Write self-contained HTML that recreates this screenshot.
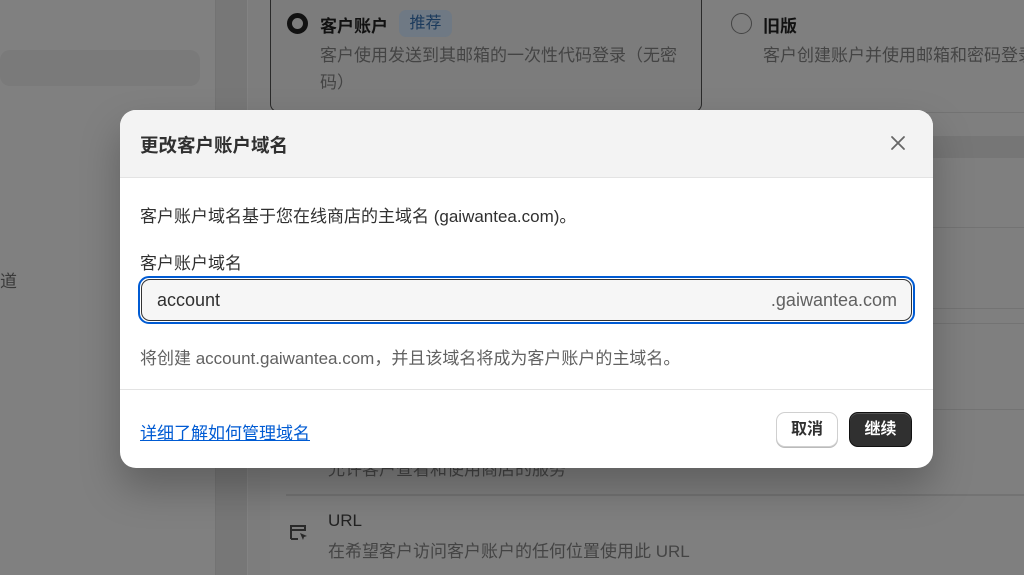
<!DOCTYPE html>
<html><head><meta charset="utf-8"><style>
*{box-sizing:border-box;margin:0;padding:0}
body{width:1024px;height:575px;overflow:hidden;background:#7f7f7f;position:relative;font-family:"Liberation Sans","Noto Sans CJK SC",sans-serif;color:#303030}
.a{position:absolute}
.bgtxt{color:#3a3a3a}
.sub{color:#444;font-size:17px}
</style></head><body>
<div class="a" style="left:0;top:0;width:215px;height:575px;background:#808080"></div>
<div class="a" style="left:0;top:50px;width:200px;height:36px;background:#7a7a7a;border-radius:10px"></div>
<div class="a bgtxt" style="left:0;top:267px;font-size:17px">道</div>
<div class="a" style="left:215px;top:0;width:33px;height:575px;background:#777;border-left:1px solid #737373;border-right:1px solid #838383"></div>
<div class="a" style="left:248px;top:0;width:22px;height:575px;background:#7d7d7d"></div>
<div class="a" style="left:270px;top:0;width:432px;height:112px;border:1px solid #2a2a2a;border-top:none;border-radius:0 0 8px 8px;background:#7c7c7c"></div>
<div class="a" style="left:287px;top:13px;width:21px;height:21px;border:5px solid #111;border-radius:50%"></div>
<div class="a" style="left:320px;top:12px;font-size:17px;font-weight:bold;color:#111">客户账户</div>
<div class="a" style="left:399px;top:10px;width:53px;height:27px;background:#6f7984;border-radius:7px;color:#1b3a5c;font-size:16px;text-align:center;line-height:27px">推荐</div>
<div class="a sub" style="left:320px;top:42px;width:372px;line-height:27px">客户使用发送到其邮箱的一次性代码登录（无密码）</div>
<div class="a" style="left:731px;top:13px;width:21px;height:21px;border:1px solid #444;border-radius:50%"></div>
<div class="a" style="left:763px;top:12px;font-size:17px;font-weight:bold;color:#111">旧版</div>
<div class="a sub" style="left:763px;top:42px;white-space:nowrap;line-height:27px">客户创建账户并使用邮箱和密码登录</div>
<div class="a" style="left:712px;top:112px;width:312px;height:1px;background:#737373"></div>
<div class="a" style="left:712px;top:136px;width:312px;height:22px;background:#767676"></div>
<div class="a" style="left:712px;top:227px;width:312px;height:1px;background:#737373"></div>
<div class="a" style="left:712px;top:308px;width:312px;height:1px;background:#737373"></div>
<div class="a" style="left:712px;top:323px;width:312px;height:1px;background:#737373"></div>
<div class="a" style="left:712px;top:409px;width:312px;height:1px;background:#737373"></div>
<div class="a sub" style="left:328px;top:455px;white-space:nowrap">允许客户查看和使用商店的服务</div>
<div class="a" style="left:286px;top:494px;width:738px;height:2px;background:#737373"></div>
<svg class="a" style="left:288px;top:522px" width="22" height="22" viewBox="0 0 22 22"><path d="M3 17V4h14v5M3 8h14M3 17h7" stroke="#2a2a2a" stroke-width="2" fill="none"/><path d="M12 11l7 3-3 1-1 3z" fill="#2a2a2a"/></svg>
<div class="a bgtxt" style="left:328px;top:511px;font-size:17px;color:#222">URL</div>
<div class="a sub" style="left:328px;top:537px;white-space:nowrap">在希望客户访问客户账户的任何位置使用此 URL</div>
<!-- modal -->
<div class="a" style="left:120px;top:110px;width:813px;height:358px;background:#fff;border-radius:16px;overflow:hidden;box-shadow:0 20px 40px rgba(0,0,0,.25)">
 <div style="height:68px;background:#f3f3f3;border-bottom:1px solid #e3e3e3;position:relative">
  <div class="a" style="left:20px;top:22px;font-size:18.5px;font-weight:bold;color:#303030">更改客户账户域名</div>
  <svg class="a" style="left:770px;top:25px" width="16" height="16" viewBox="0 0 16 16"><path d="M2 2L14 14M14 2L2 14" stroke="#666" stroke-width="1.8" stroke-linecap="round"/></svg>
 </div>
 <div class="a" style="left:20px;top:92px;font-size:17px;color:#303030">客户账户域名基于您在线商店的主域名 (gaiwantea.com)。</div>
 <div class="a" style="left:20px;top:139px;font-size:17px;color:#303030">客户账户域名</div>
 <div class="a" style="left:18px;top:166px;width:777px;height:48px;border:2px solid #005bd3;border-radius:11px;padding:1px">
  <div style="width:100%;height:100%;border:1px solid #333;border-radius:9px;background:#f6f6f6;position:relative;font-size:18px">
   <span class="a" style="left:15px;top:10px;color:#303030">account</span>
   <span class="a" style="right:14px;top:10px;color:#616161">.gaiwantea.com</span>
  </div>
 </div>
 <div class="a" style="left:20px;top:234px;font-size:17px;color:#616161">将创建 account.gaiwantea.com，并且该域名将成为客户账户的主域名。</div>
 <div class="a" style="left:0;top:279px;width:813px;height:1px;background:#e3e3e3"></div>
 <div class="a" style="left:20px;top:309px;font-size:17px;color:#005bd3;text-decoration:underline">详细了解如何管理域名</div>
 <div class="a" style="left:656px;top:302px;width:62px;height:35px;border:1px solid #d0d0d0;border-radius:9px;background:#fff;box-shadow:0 1px 0 #bbb;text-align:center;line-height:33px;font-size:16px;font-weight:bold;color:#303030">取消</div>
 <div class="a" style="left:729px;top:302px;width:63px;height:35px;border-radius:9px;background:#303030;border:1px solid #111;box-shadow:inset 0 1px 0 #555;text-align:center;line-height:33px;font-size:16px;font-weight:bold;color:#fff">继续</div>
</div>
</body></html>
